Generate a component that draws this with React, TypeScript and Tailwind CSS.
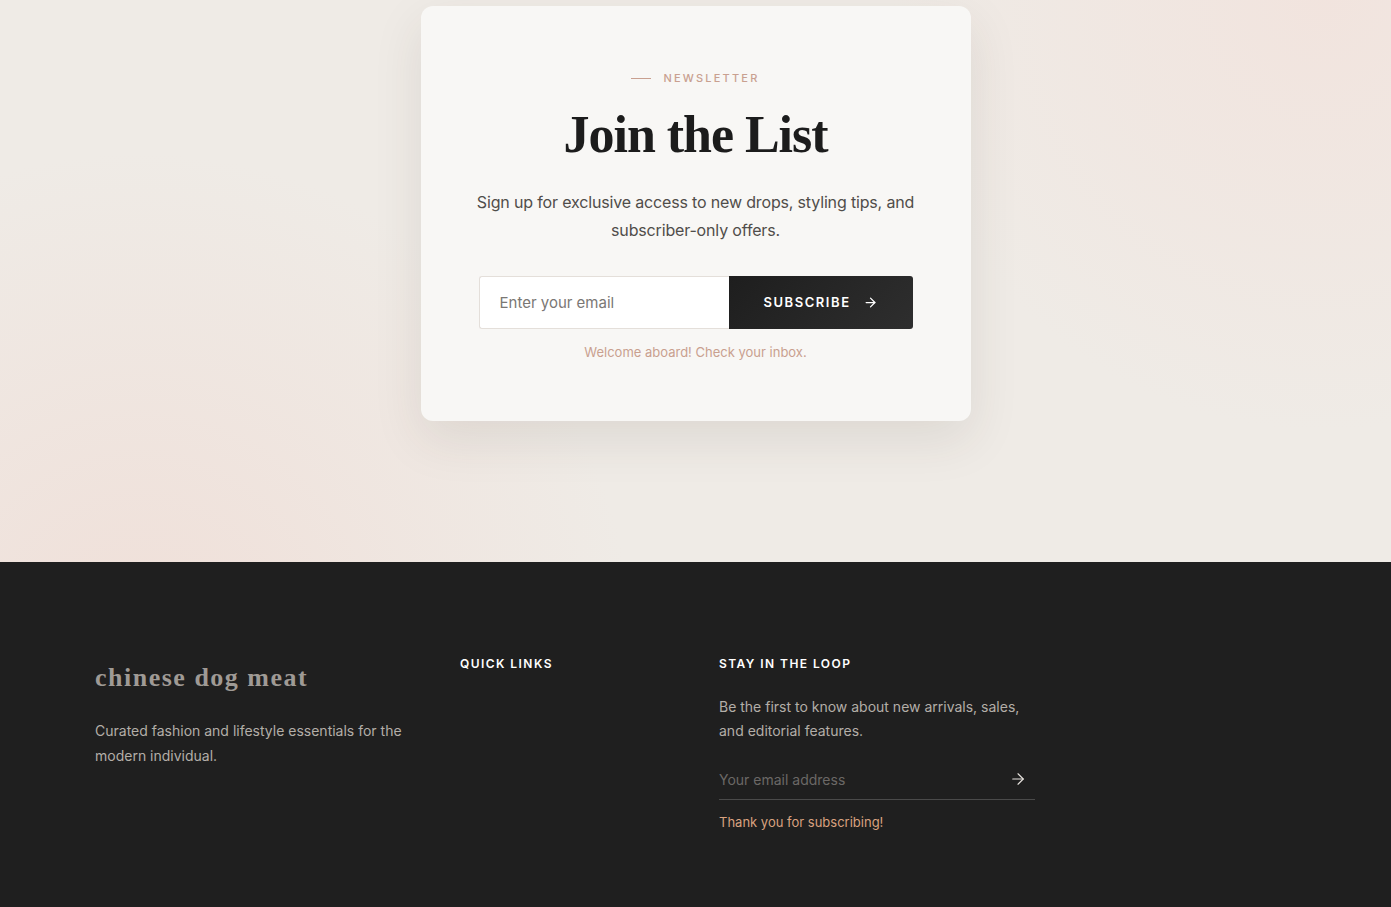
import { ArrowRight } from 'lucide-react'

const sans = "font-['Inter','Liberation_Sans',sans-serif]"

function NewsletterCard() {
  return (
    <div className="mx-auto w-[550px] rounded-xl bg-[#f8f7f5] px-10 pt-[63px] pb-[59px] text-center shadow-[0_18px_50px_rgba(60,50,40,0.10)]">
      <div className="flex items-center justify-center gap-3">
        <span className="h-px w-5 bg-[#c9a090]" />
        <span className="text-[11px] leading-[18px] font-medium tracking-[0.2em] text-[#c9a090]">NEWSLETTER</span>
      </div>
      <h2 className="mt-[19px] font-['Liberation_Serif',serif] text-[52px] leading-[57px] font-bold tracking-[-0.02em] text-[#1c1c1c]">
        Join the List
      </h2>
      <p className="mx-auto mt-[25px] w-[450px] text-[16px] leading-[28px] tracking-[-0.01em] text-[#504d4a]">
        Sign up for exclusive access to new drops, styling tips, and subscriber-only offers.
      </p>
      <form className="mx-auto mt-8 flex h-[53px] w-[434px]" onSubmit={(e) => e.preventDefault()}>
        <input
          className="h-full w-[250px] rounded-l-[3px] border border-r-0 border-[#e4dfda] bg-white px-5 text-[15px] text-[#333] outline-none placeholder:text-[#7a7774]"
          placeholder="Enter your email"
        />
        <button className="flex h-full flex-1 items-center justify-center gap-3 rounded-r-[3px] bg-[linear-gradient(135deg,#1e1e1e,#2e2e2e)] text-[13px] font-semibold tracking-[0.12em] text-white">
          SUBSCRIBE
          <ArrowRight size={15} strokeWidth={2} />
        </button>
      </form>
      <p className="mt-[13px] text-[13px] leading-[20px] text-[#c9a08f]">Welcome aboard! Check your inbox.</p>
    </div>
  )
}

function Footer() {
  return (
    <footer className="bg-[#1f1f1f] px-[95px] pt-[94px] pb-24">
      <div className="grid grid-cols-[365px_259px_316px]">
        <div>
          <div className="mt-[6px] font-['Liberation_Serif',serif] text-[26px] leading-[32px] font-bold tracking-[1.5px] text-[#9f9a95]">
            chinese dog meat
          </div>
          <p className="mt-6 w-[320px] text-[14px] leading-[25px] text-[#b3aea8]">
            Curated fashion and lifestyle essentials for the modern individual.
          </p>
        </div>
        <div>
          <h4 className="text-[12px] leading-4 font-semibold tracking-[0.12em] text-white">QUICK LINKS</h4>
        </div>
        <div>
          <h4 className="text-[12px] leading-4 font-semibold tracking-[0.12em] text-white">STAY IN THE LOOP</h4>
          <p className="mt-[23px] text-[14px] leading-6 text-[#b3aea8]">
            Be the first to know about new arrivals, sales, and editorial features.
          </p>
          <div className="mt-4 flex h-[41px] items-center border-b border-[#4a4a4a]">
            <input
              className="flex-1 bg-transparent text-[14px] text-white outline-none placeholder:text-[#6b6866]"
              placeholder="Your email address"
            />
            <ArrowRight size={18} strokeWidth={1.5} className="mr-[8px] text-[#e8e4df]" />
          </div>
          <p className="mt-3 text-[13px] leading-5 text-[#d9a27f]">Thank you for subscribing!</p>
        </div>
      </div>
    </footer>
  )
}

export default function App() {
  return (
    <div className={`${sans} min-h-screen bg-[#1f1f1f]`}>
      <section className="h-[562px] bg-[#efebe6] bg-[radial-gradient(circle_at_10%_115%,rgba(240,222,215,0.9),transparent_35%),radial-gradient(circle_at_95%_0%,rgba(242,226,220,0.8),transparent_30%)] pt-[6px]">
        <NewsletterCard />
      </section>
      <Footer />
    </div>
  )
}
